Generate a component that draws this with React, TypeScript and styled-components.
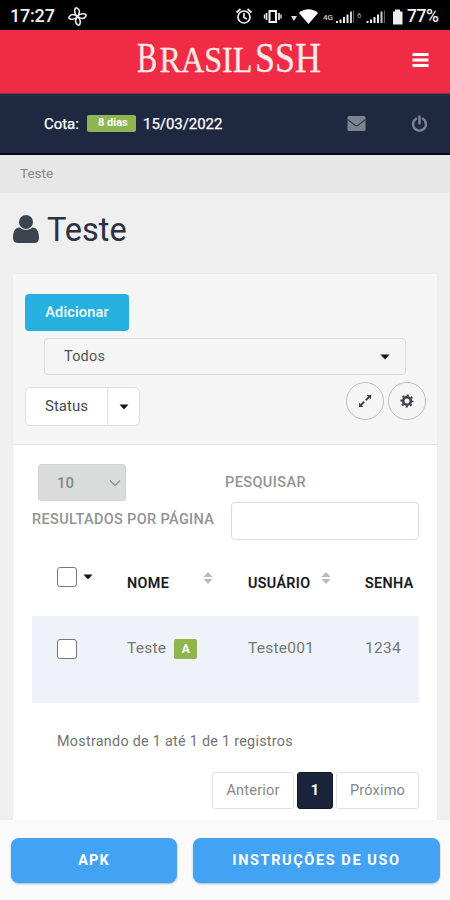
import React from "react";
import styled, { createGlobalStyle } from "styled-components";

const Global = createGlobalStyle`
  *, *::before, *::after { box-sizing: border-box; }
  html, body { margin: 0; padding: 0; background: #fafafa; }
  body { width: 450px; height: 900px; overflow: hidden; font-family: Roboto, "Noto Sans", sans-serif; font-size: 14px; color: #6f757b; }
  button, input { font-family: inherit; }
  svg { display: block; flex: none; }
`;

const Screen = styled.div`
  width: 450px;
  height: 900px;
  display: flex;
  flex-direction: column;
  overflow: hidden;
  background: #efefef;
`;

const StatusBar = styled.div`
  height: 30px;
  flex: none;
  background: #000;
  color: #f1f1f1;
  display: flex;
  align-items: center;
  padding: 2px 9px 0 10px;
`;
const Clock = styled.span`
  font-size: 18px;
  font-weight: 500;
  line-height: 28px;
  width: 58px;
  letter-spacing: -0.2px;
  white-space: nowrap;
`;
const StatusIcons = styled.div`
  margin-left: auto;
  display: flex;
  align-items: center;
`;
const Battery = styled.span`
  font-size: 17.5px;
  font-weight: 500;
  width: 34px;
  margin-left: 4px;
  letter-spacing: -0.4px;
  white-space: nowrap;
`;

const Brand = styled.header`
  height: 64px;
  flex: none;
  background: #ef2b45;
  border-bottom: 1px solid #8f2b43;
  display: flex;
  align-items: center;
  justify-content: space-between;
  padding: 0 21px 3px 136px;
`;

const Quota = styled.div`
  height: 61px;
  flex: none;
  background: #1e2840;
  border-top: 2px solid #143149;
  border-bottom: 2px solid #05081a;
  color: #fff;
  display: flex;
  align-items: center;
  padding: 0 22px 2px 44px;
  font-size: 15px;
`;
const DaysBadge = styled.span`
  width: 49px;
  height: 17px;
  margin: 0 7px 0 7px;
  padding-left: 11px;
  border-radius: 2px;
  background: #91b453;
  font-size: 11px;
  font-weight: 700;
  line-height: 15px;
  white-space: nowrap;
`;
const QuotaText = styled.span<{ $w: number; $track?: string }>`
  width: ${(p) => p.$w}px;
  letter-spacing: ${(p) => p.$track ?? "0"};
  white-space: nowrap;
  -webkit-text-stroke: 0.25px currentColor;
`;
const QuotaActions = styled.div`
  margin-left: auto;
  display: flex;
  align-items: center;
  gap: 45px;
`;

const Breadcrumb = styled.nav`
  height: 38px;
  flex: none;
  background: #e7e7e7;
  color: #85878a;
  padding: 0 20px;
  font-size: 13.5px;
  line-height: 37px;
`;

const Title = styled.h1`
  height: 81px;
  flex: none;
  margin: 0;
  padding: 0 13px 7px;
  display: flex;
  align-items: center;
  gap: 8px;
  color: #2d3043;
  font-size: 32.5px;
  font-weight: 400;
  letter-spacing: 0;
`;

const Card = styled.section`
  flex: 1;
  margin: -1px 12px 0 12px;
  background: #fff;
  border: 1px solid #ececec;
  border-bottom: 0;
  border-radius: 4px 4px 0 0;
  display: flex;
  flex-direction: column;
`;
const CardHeader = styled.div`
  height: 171px;
  flex: none;
  background: #f5f5f5;
  border-bottom: 1px solid #e4e4e4;
  border-radius: 4px 4px 0 0;
  padding: 20px 11px 0 12px;
`;
const AddButton = styled.button`
  display: block;
  width: 104px;
  height: 37px;
  padding: 0;
  border: 0;
  border-radius: 4px;
  background: #26b1e1;
  color: #fff;
  font-size: 14.5px;
  font-weight: 500;
  letter-spacing: 0.15px;
`;
const Filter = styled.div`
  height: 37px;
  margin: 7px 20px 0 19px;
  padding: 0 15px 0 19px;
  border: 1px solid #dedede;
  border-radius: 4px;
  display: flex;
  align-items: center;
  justify-content: space-between;
  color: #515559;
  font-size: 14.5px;
  letter-spacing: 0.2px;
`;
const Tools = styled.div`
  margin-top: 7px;
  display: flex;
  justify-content: space-between;
`;
const StatusGroup = styled.div`
  height: 39px;
  margin-top: 5px;
  border: 1px solid #e0e0e0;
  border-radius: 5px;
  background: #fff;
  display: flex;
  color: #46494d;
  font-size: 15px;
`;
const StatusLabel = styled.span`
  width: 82px;
  line-height: 37px;
  text-align: center;
  border-right: 1px solid #e0e0e0;
`;
const StatusArrow = styled.span`
  width: 31px;
  display: grid;
  place-items: center;
`;
const RoundTools = styled.div`
  display: flex;
  gap: 4px;
`;
const RoundButton = styled.button`
  width: 38px;
  height: 38px;
  padding: 0;
  border: 1px solid #bfc0c2;
  border-radius: 50%;
  background: transparent;
  color: #3c414b;
  display: grid;
  place-items: center;
`;

const CardBody = styled.div`
  padding: 18px 18px 0 19px;
`;
const Controls = styled.div`
  display: flex;
  justify-content: space-between;
  height: 80px;
  color: #939393;
  font-size: 14.5px;
  font-weight: 500;
`;
const PageLength = styled.div`
  padding-top: 1px;
  white-space: nowrap;
`;
const LengthSelect = styled.div`
  width: 88px;
  height: 37px;
  margin: 0 0 11px 6px;
  padding: 0 4px 0 18px;
  display: flex;
  align-items: center;
  justify-content: space-between;
  border: 1px solid #d2d3d3;
  border-radius: 3px;
  background: #dadbdb;
  color: #888;
  font-size: 15px;
`;
const Caption = styled.div<{ $indent?: number; $track?: number }>`
  line-height: 16px;
  margin-left: ${(p) => p.$indent ?? 0}px;
  letter-spacing: ${(p) => p.$track ?? 0}px;
`;
const Search = styled.label`
  width: 188px;
  padding-top: 12px;
`;
const SearchInput = styled.input`
  display: block;
  width: 188px;
  height: 38px;
  margin-top: 11px;
  border: 1.5px solid #dadddd;
  border-radius: 4px;
  background: #fff;
`;

const HeadRow = styled.div`
  display: grid;
  grid-template-columns: 95px 121px 117px 1fr;
  height: 73px;
  padding-top: 24px;
  color: #15171a;
  font-size: 14.3px;
  font-weight: 500;
`;
const Cell = styled.div<{ $between?: number }>`
  display: flex;
  align-items: flex-start;
  justify-content: ${(p) => (p.$between === undefined ? "flex-start" : "space-between")};
  padding-right: ${(p) => p.$between ?? 0}px;
  white-space: nowrap;
`;
const HeadText = styled.span<{ $track?: number }>`
  padding-top: 8px;
  line-height: 16px;
  letter-spacing: ${(p) => p.$track ?? 0.4}px;
  -webkit-text-stroke: 0.2px currentColor;
`;
const CheckBox = styled.span`
  width: 20px;
  height: 20px;
  margin-left: 25px;
  border: 1px solid #777;
  border-radius: 3px;
  background: #fff;
`;
const CaretSlot = styled.span`
  padding: 7px 0 0 6px;
`;
const SortSlot = styled.span`
  padding-top: 4px;
`;

const DataRow = styled.div`
  display: grid;
  grid-template-columns: 95px 121px 117px 1fr;
  height: 87px;
  padding-top: 23px;
  background: #eff2f8;
  color: #747779;
  font-size: 15.5px;
  letter-spacing: 0.27px;
  line-height: 18px;
`;
const Active = styled.span`
  width: 23px;
  height: 20px;
  margin-left: 8px;
  border-radius: 2px;
  background: #8eb64d;
  color: #fff;
  font-size: 12px;
  font-weight: 700;
  line-height: 20px;
  text-align: center;
`;
const Summary = styled.p`
  margin: 28px 0 0 25px;
  font-size: 14.3px;
  line-height: 20px;
  letter-spacing: 0.3px;
  color: #707376;
`;
const Pager = styled.div`
  margin-top: 21px;
  display: flex;
  justify-content: flex-end;
  gap: 3px;
`;
const PageItem = styled.span<{ $w: number; $current?: boolean }>`
  width: ${(p) => p.$w}px;
  height: 37px;
  line-height: 35px;
  text-align: center;
  border-radius: 3px;
  border: 1px solid ${(p) => (p.$current ? "#11182b" : "#e2e2e2")};
  background: ${(p) => (p.$current ? "#1b243a" : "#fff")};
  color: ${(p) => (p.$current ? "#fff" : "#85878a")};
  font-weight: ${(p) => (p.$current ? 700 : 400)};
  font-size: 14.5px;
  letter-spacing: 0.2px;
`;

const BottomBar = styled.footer`
  height: 80px;
  flex: none;
  background: #fafafa;
  display: flex;
  gap: 16px;
  padding: 18px 10px 0 11px;
`;
const BottomButton = styled.button<{ $w: number; $track: number }>`
  width: ${(p) => p.$w}px;
  height: 45px;
  padding: 0;
  border: 0;
  border-radius: 8px;
  background: #42a2f4;
  box-shadow: 0 1px 2px rgba(60, 80, 110, 0.4);
  color: #fff;
  font-size: 14.5px;
  font-weight: 700;
  letter-spacing: ${(p) => p.$track}px;
`;

const Caret = () => (
  <svg width="10" height="6" viewBox="0 0 10 6"><path d="M.5.5h9L5 5.5z" fill="#151515" /></svg>
);

const Sort = () => (
  <svg width="10" height="14" viewBox="0 0 10 14" fill="#b8b9bb"><path d="M.5 6 5 1l4.500 5zM.5 8 5 13 9.500 8z" /></svg>
);

const blade = "M9.200 9.500C6.500 8 5.700 5.500 6 2.600c.1-1.200 1-1.700 2-1.300 3.200 1.200 3.800 4.700 1.200 8.200Z";
const Fan = () => (
  <svg width="19" height="19" viewBox="0 0 19 19" fill="none" stroke="#eee" strokeWidth="1.600">
    {[8, 98, 188, 278].map((angle) => (
      <path key={angle} d={blade} transform={`rotate(${angle} 9.5 9.5)`} />
    ))}
  </svg>
);

const SystemIcons = () => (
  <svg width="168" height="20" viewBox="235 5 168 20" fontFamily="Roboto, sans-serif">
    <g fill="none" stroke="#eee" strokeWidth="1.700">
      <circle cx="244" cy="16" r="6" />
      <path d="M244 12v4.500l3 1.500M236.500 11.500l4-3.500M251.500 11.500l-4-3.500" />
      <rect x="269.500" y="10" width="6.500" height="11" strokeWidth="2" />
      <path d="M266.500 12v7M279 12v7" />
      <path d="M264.500 13.500v4M281 13.500v4" strokeWidth="1.300" />
    </g>
    <path d="M291 15h6l-3 5z" fill="#ddd" />
    <path d="M299 12c5.500-5 13.500-5 19 0l-9.500 11z" fill="#fff" />
    <text x="323" y="19" fontSize="8" fontWeight="500" fill="#ccc">4G</text>
    <g fill="#eee">
      <path d="M336 20h2v2h-2zM339.500 18.500h2v3.500h-2zM343 16h2v6h-2zM346.500 13.500h2v8.500h-2z" />
      <path d="M366.500 20h2v2h-2zM370 18.500h2v3.500h-2zM373.500 16h2v6h-2zM377 13.500h2v8.500h-2z" />
      <path d="M350 10.500h2v11.500h-2zM380.500 10.500h2v11.500h-2z" opacity=".85" />
      <path d="M353 9.500h1v12.500h-1zM384 9.500h1v12.500h-1z" opacity=".4" />
      <path d="M393 10.500h2v-2h5v2h2.500v13h-9.500z" />
    </g>
    <text x="357" y="17" fontSize="8" fill="#aaa">6</text>
  </svg>
);

const Logo = () => (
  <svg width="190" height="56" viewBox="136 33 190 56" fill="#ffe9e7" stroke="#ffe9e7" strokeWidth=".3" fontFamily="'Liberation Serif', serif">
    <text transform="translate(137 72.500) scale(.72 1)" fontSize="42">B</text>
    <text transform="translate(159.500 72.500) scale(.92 1)" fontSize="35">RASIL</text>
    <text transform="translate(255 72.500) scale(.855 1)" fontSize="42">SSH</text>
  </svg>
);

const Menu = () => (
  <svg width="17" height="16" viewBox="0 0 17 16" fill="#fff">
    <rect x=".5" y="1" width="16" height="3" rx=".6" />
    <rect x=".5" y="6.500" width="16" height="3" rx=".6" />
    <rect x=".5" y="12" width="16" height="3" rx=".6" />
  </svg>
);

const Mail = () => (
  <svg width="19" height="15" viewBox="0 0 19 15">
    <rect x=".5" width="18" height="15" rx="1.500" fill="#7c838e" />
    <path d="M.5 3.500 8 9.300q1.500 1 3 0l7.500-5.800" fill="none" stroke="#313b50" strokeWidth="1.200" />
  </svg>
);

const Power = () => (
  <svg width="17" height="18" viewBox="0 0 17 18" fill="none" stroke="#7c838e" strokeWidth="2.500" strokeLinecap="round">
    <path d="M5 3.700a6.500 6.500 0 1 0 7 0M8.500 1.500v7" />
  </svg>
);

const PersonIcon = styled.svg`
  margin-bottom: 2px;
`;
const Person = () => (
  <PersonIcon width="26" height="28" viewBox="0 0 26 28" fill="#3c4450">
    <path d="M6.500 12.500C2 12.500 0 17 0 23q0 5 5 5h16q5 0 5-5c0-6-2-10.500-6.500-10.500-2 1.600-4 2.300-6.500 2.300s-4.500-.7-6.500-2.300Z" />
    <circle cx="13" cy="7" r="7" />
  </PersonIcon>
);

const Expand = () => (
  <svg width="14" height="14" viewBox="0 0 14 14" fill="currentColor">
    <path d="M8.500 1H13v4.500zM1 8.500V13h4.500z" />
    <path d="m11.500 2.500-3.800 3.800M6.300 7.700l-3.800 3.800" stroke="currentColor" strokeWidth="1.900" />
  </svg>
);

const Gear = () => (
  <svg width="14" height="14" viewBox="0 0 14 14" fill="none" stroke="currentColor">
    <circle cx="7" cy="7" r="3.800" strokeWidth="2.600" />
    <circle cx="7" cy="7" r="5.700" strokeWidth="1.700" strokeDasharray="2.238 2.238" strokeDashoffset="1.119" />
  </svg>
);

export default function App() {
  return (
    <>
      <Global />
      <Screen>
        <StatusBar>
          <Clock>17:27</Clock>
          <Fan />
          <StatusIcons>
            <SystemIcons />
            <Battery>77%</Battery>
          </StatusIcons>
        </StatusBar>
        <Brand>
          <Logo />
          <Menu />
        </Brand>
        <Quota>
          <QuotaText $w={36} $track="-0.05px">Cota:</QuotaText>
          <DaysBadge>8 dias</DaysBadge>
          <QuotaText $w={82} $track="-0.05px">15/03/2022</QuotaText>
          <QuotaActions>
            <Mail />
            <Power />
          </QuotaActions>
        </Quota>
        <Breadcrumb>Teste</Breadcrumb>
        <Title>
          <Person />
          Teste
        </Title>
        <Card>
          <CardHeader>
            <AddButton>Adicionar</AddButton>
            <Filter>
              Todos
              <Caret />
            </Filter>
            <Tools>
              <StatusGroup>
                <StatusLabel>Status</StatusLabel>
                <StatusArrow><Caret /></StatusArrow>
              </StatusGroup>
              <RoundTools>
                <RoundButton aria-label="Expandir"><Expand /></RoundButton>
                <RoundButton aria-label="Configurar"><Gear /></RoundButton>
              </RoundTools>
            </Tools>
          </CardHeader>
          <CardBody>
            <Controls>
              <PageLength>
                <LengthSelect>
                  10
                  <svg width="12" height="8" viewBox="0 0 12 8" fill="none" stroke="#909090" strokeWidth="1.300"><path d="m1 1.500 5 5 5-5" /></svg>
                </LengthSelect>
                <Caption $track={0.35}>RESULTADOS POR PÁGINA</Caption>
              </PageLength>
              <Search>
                <Caption $indent={-6} $track={0.4}>PESQUISAR</Caption>
                <SearchInput />
              </Search>
            </Controls>
            <HeadRow>
              <Cell>
                <CheckBox />
                <CaretSlot><Caret /></CaretSlot>
              </Cell>
              <Cell $between={35}>
                <HeadText>NOME</HeadText>
                <SortSlot><Sort /></SortSlot>
              </Cell>
              <Cell $between={34}>
                <HeadText>USUÁRIO</HeadText>
                <SortSlot><Sort /></SortSlot>
              </Cell>
              <Cell><HeadText>SENHA</HeadText></Cell>
            </HeadRow>
            <DataRow>
              <Cell><CheckBox /></Cell>
              <Cell>Teste<Active>A</Active></Cell>
              <Cell>Teste001</Cell>
              <Cell>1234</Cell>
            </DataRow>
            <Summary>Mostrando de 1 até 1 de 1 registros</Summary>
            <Pager>
              <PageItem $w={82}>Anterior</PageItem>
              <PageItem $w={36} $current>1</PageItem>
              <PageItem $w={83}>Próximo</PageItem>
            </Pager>
          </CardBody>
        </Card>
        <BottomBar>
          <BottomButton $w={166} $track={1}>APK</BottomButton>
          <BottomButton $w={247} $track={1.6}>INSTRUÇÕES DE USO</BottomButton>
        </BottomBar>
      </Screen>
    </>
  );
}
